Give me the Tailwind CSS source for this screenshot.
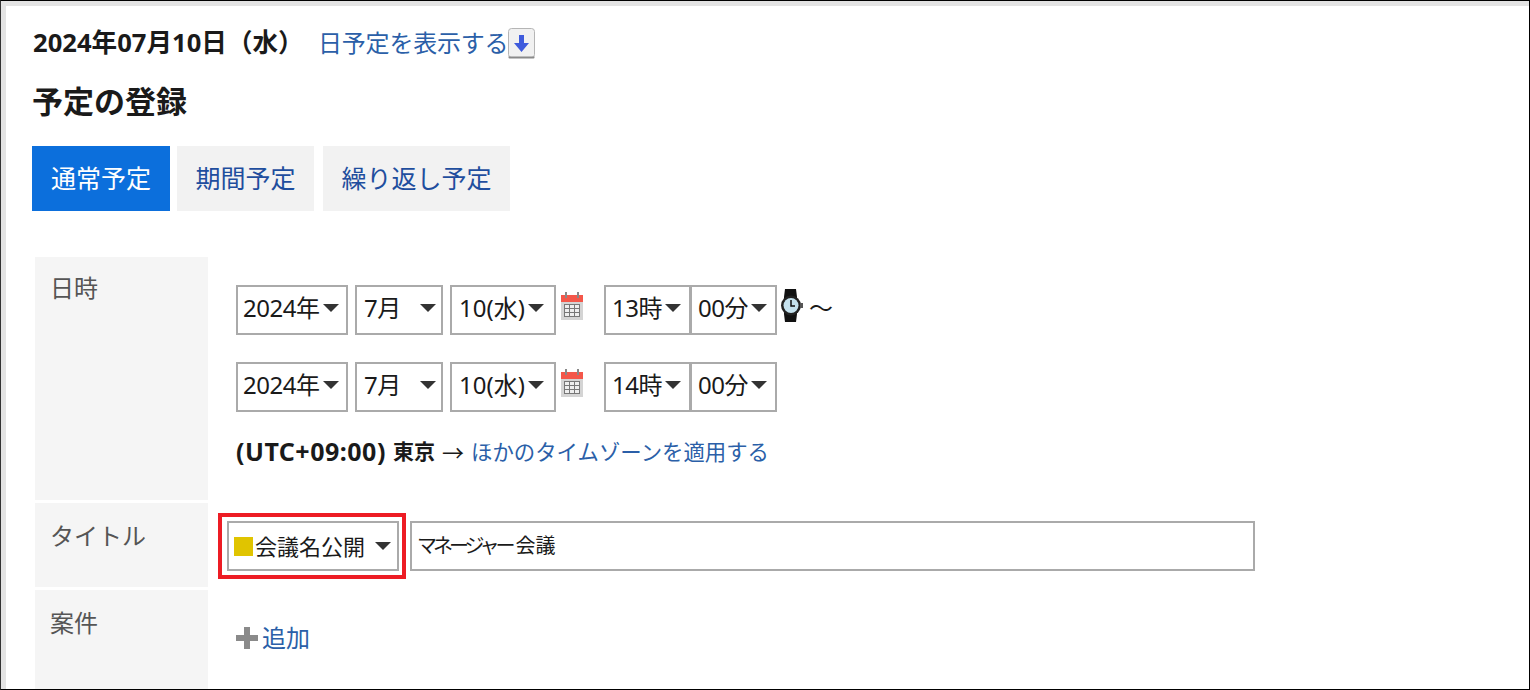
<!doctype html>
<html>
    <head>
        <title>予定の登録</title>
        <meta charset="UTF-8" />
        <script src="https://cdn.jsdelivr.net/npm/@tailwindcss/browser@4"></script>
    </head>

    <body class="font-['Noto_Sans','Noto_Sans_CJK_JP',sans-serif] text-[#1a1a1a] bg-white overflow-hidden">
        <!-- screenshot frame -->
        <div class="h-[690px] w-[1530px] overflow-hidden border border-black border-l-[#333]">
            <div class="h-full border-t-[5px] border-l-[5px] border-[#e3e3e3] bg-white pl-[26px] overflow-hidden">
                <!-- date header -->
                <div class="flex items-center h-[34px] mt-[20px]">
                    <span class="text-[25.600px] font-bold ml-px w-[285px] whitespace-nowrap">2024年07月10日（水）</span>
                    <a class="text-[24px] text-[#2b5fa8] whitespace-nowrap w-[190px] tracking-[-0.2px]">日予定を表示する</a>
                    <svg width="27" height="31" viewBox="0 0 27 31">
                        <rect x="0.5" y="0.5" width="26" height="29" rx="3" fill="#f1f1f1" stroke="#b5b5b5" />
                        <path d="M0.5 28.500h26v1a1 1 0 0 1-1 1h-24a1 1 0 0 1-1-1z" fill="#8a8a8a" />
                        <path d="M11 7h5v8h5l-7.500 9-7.500-9h5z" fill="#3f5bdc" />
                    </svg>
                </div>
                <h1 class="text-[31px] font-bold mt-[21px] leading-[40px] whitespace-nowrap">予定の登録</h1>
                <!-- tabs -->
                <div class="flex mt-[25px] text-[25px] h-[65px]">
                    <div class="w-[138px] flex items-center justify-center bg-[#0c6fdc] text-white">通常予定</div>
                    <div class="w-[137px] ml-[7px] flex items-center justify-center bg-[#f2f2f2] text-[#1f4e9e]">期間予定</div>
                    <div class="w-[187px] ml-[9px] flex items-center justify-center bg-[#f2f2f2] text-[#1f4e9e]">繰り返し予定</div>
                </div>
                <!-- form table -->
                <div class="mt-[46px] ml-[3px] flex flex-col gap-[3px]">
                    <!-- date row -->
                    <div class="flex h-[243px]">
                        <div class="w-[173px] bg-[#f5f5f5] text-[24px] text-[#555] pl-[15px] pt-[13px]">日時</div>
                        <div class="pl-[28px] pt-[28px]">
                            <div class="flex items-center h-[50px]">
                                <div class="w-[112px] h-[50px] border-2 border-[#aaa] flex items-center pl-[5px] pb-[4px] text-[24px] tracking-[-0.5px]">2024年<span class="ml-[4px] border-x-[8px] border-t-[8px] border-x-transparent border-t-[#333]"></span></div>
                                <div class="w-[88px] ml-[7px] h-[50px] border-2 border-[#aaa] flex items-center pl-[7px] pb-[4px] text-[24px] tracking-[-0.5px]">7月<span class="ml-[19px] border-x-[8px] border-t-[8px] border-x-transparent border-t-[#333]"></span></div>
                                <div class="w-[106px] ml-[7px] h-[50px] border-2 border-[#aaa] flex items-center pl-[7px] pb-[4px] text-[24px]">10(水)<span class="ml-[3px] border-x-[8px] border-t-[8px] border-x-transparent border-t-[#333]"></span></div>
                                <svg class="ml-[5px] mb-[9px]" width="22" height="28" viewBox="0 0 22 28">
                                    <rect x="0" y="3" width="22" height="25" fill="#d4d4d4" />
                                    <rect x="0" y="3" width="22" height="7" fill="#f4574a" />
                                    <rect x="4" y="0" width="2" height="6" fill="#888" />
                                    <rect x="16" y="0" width="2" height="6" fill="#888" />
                                    <rect x="3.500" y="12.500" width="15" height="12" fill="#eee" stroke="#777" />
                                    <path d="M3.500 16.500h15M3.500 20.500h15M8.500 12.500v12M13.500 12.500v12" stroke="#777" />
                                </svg>
                                <div class="w-[87px] ml-[21px] h-[50px] border-2 border-[#aaa] flex items-center pl-[6px] pb-[4px] text-[24px] tracking-[-0.5px]">13時<span class="ml-[3px] border-x-[8px] border-t-[8px] border-x-transparent border-t-[#333]"></span></div>
                                <div class="w-[87px] -ml-px h-[50px] border-2 border-[#aaa] flex items-center pl-[6px] pb-[4px] text-[24px] tracking-[-0.5px]">00分<span class="ml-[3px] border-x-[8px] border-t-[8px] border-x-transparent border-t-[#333]"></span></div>
                                <svg class="ml-[4px] mb-[9px]" width="22" height="33" viewBox="0 0 22 33">
                                    <path d="M4 0h11l1 8v17l-1 8H4l-1-8V8z" fill="#111" />
                                    <circle cx="10" cy="16.500" r="10" fill="#222" />
                                    <circle cx="10" cy="16.500" r="7.500" fill="#c5e2ee" />
                                    <path d="M10 11v6h4" fill="none" stroke="#111" stroke-width="1.500" />
                                    <rect x="19" y="14" width="3" height="5" fill="#555" />
                                </svg>
                                <span class="ml-[6px] text-[24px] leading-none pb-[4px]">～</span>
                            </div>
                            <div class="flex items-center h-[50px] mt-[27px]">
                                <div class="w-[112px] h-[50px] border-2 border-[#aaa] flex items-center pl-[5px] pb-[4px] text-[24px] tracking-[-0.5px]">2024年<span class="ml-[4px] border-x-[8px] border-t-[8px] border-x-transparent border-t-[#333]"></span></div>
                                <div class="w-[88px] ml-[7px] h-[50px] border-2 border-[#aaa] flex items-center pl-[7px] pb-[4px] text-[24px] tracking-[-0.5px]">7月<span class="ml-[19px] border-x-[8px] border-t-[8px] border-x-transparent border-t-[#333]"></span></div>
                                <div class="w-[106px] ml-[7px] h-[50px] border-2 border-[#aaa] flex items-center pl-[7px] pb-[4px] text-[24px]">10(水)<span class="ml-[3px] border-x-[8px] border-t-[8px] border-x-transparent border-t-[#333]"></span></div>
                                <svg class="ml-[5px] mb-[9px]" width="22" height="28" viewBox="0 0 22 28">
                                    <rect x="0" y="3" width="22" height="25" fill="#d4d4d4" />
                                    <rect x="0" y="3" width="22" height="7" fill="#f4574a" />
                                    <rect x="4" y="0" width="2" height="6" fill="#888" />
                                    <rect x="16" y="0" width="2" height="6" fill="#888" />
                                    <rect x="3.500" y="12.500" width="15" height="12" fill="#eee" stroke="#777" />
                                    <path d="M3.500 16.500h15M3.500 20.500h15M8.500 12.500v12M13.500 12.500v12" stroke="#777" />
                                </svg>
                                <div class="w-[87px] ml-[21px] h-[50px] border-2 border-[#aaa] flex items-center pl-[6px] pb-[4px] text-[24px] tracking-[-0.5px]">14時<span class="ml-[3px] border-x-[8px] border-t-[8px] border-x-transparent border-t-[#333]"></span></div>
                                <div class="w-[87px] -ml-px h-[50px] border-2 border-[#aaa] flex items-center pl-[6px] pb-[4px] text-[24px] tracking-[-0.5px]">00分<span class="ml-[3px] border-x-[8px] border-t-[8px] border-x-transparent border-t-[#333]"></span></div>
                            </div>
                            <div class="mt-[22px] flex items-center h-[36px] whitespace-nowrap">
                                <b class="text-[25px] tracking-[0.5px] w-[157px]">(UTC+09:00)</b>
                                <b class="text-[21px] w-[49px]">東京</b>
                                <span class="text-[22px] w-[29px]">→</span>
                                <a class="text-[21.400px] text-[#2b5fa8]">ほかのタイムゾーンを適用する</a>
                            </div>
                        </div>
                    </div>
                    <!-- title row -->
                    <div class="flex h-[84px]">
                        <div class="w-[173px] bg-[#f5f5f5] text-[24px] text-[#555] pl-[15px] pt-[15px]">タイトル</div>
                        <div class="pl-[10px] pt-[10px] flex items-start">
                            <div class="w-[188px] h-[66px] border-[4px] border-[#ed1c24] pl-[5px] pr-[3px] py-[4px]">
                                <div class="h-[50px] border-2 border-[#aaa] flex items-center pl-[5px] text-[22px]">
                                    <span class="w-[19px] h-[19px] bg-[#e0c400] shrink-0"></span>
                                    <span class="ml-[2px] whitespace-nowrap">会議名公開</span>
                                    <span class="ml-[10px] border-x-[8px] border-t-[8px] border-x-transparent border-t-[#333]"></span>
                                </div>
                            </div>
                            <div class="w-[845px] h-[50px] ml-[4px] mt-[8px] border-2 border-[#aaa] flex items-center pl-[5px] text-[20px] whitespace-nowrap"><span class="tracking-[-4px]">マネージャー</span><span class="ml-[4px]">会議</span></div>
                        </div>
                    </div>
                    <!-- project row -->
                    <div class="flex h-[120px]">
                        <div class="w-[173px] bg-[#f5f5f5] text-[24px] text-[#555] pl-[15px] pt-[15px]">案件</div>
                        <div class="pl-[28px] flex items-center h-[96px]">
                            <svg width="22" height="24" viewBox="0 0 22 24">
                                <path d="M8 1h6v8h8v6h-8v8H8v-8H0V9h8z" fill="#8a8a8a" />
                            </svg>
                            <a class="ml-[4px] text-[24px] text-[#2b5fa8]">追加</a>
                        </div>
                    </div>
                </div>
            </div>
        </div>
    </body>
</html>
